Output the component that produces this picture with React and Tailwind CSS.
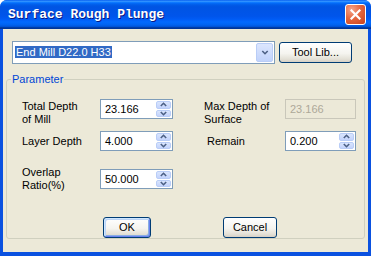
import React from 'react';

const Chevron = ({ up = false, w = 7 }) => (
  <svg width={w} height="5" viewBox="0 0 7 5">
    <path
      d={up ? 'M0.8 4 L3.5 1.3 L6.2 4' : 'M0.8 1 L3.5 3.7 L6.2 1'}
      stroke="#4D6185"
      strokeWidth="1.6"
      fill="none"
    />
  </svg>
);

const spinPart =
  'flex flex-1 items-center justify-center rounded-[2px] border border-[#B9CDF7] bg-[linear-gradient(180deg,#D9E5FD_0%,#C3D3FC_100%)]';

const SpinField = ({ value, width = 'w-[73px]' }) => (
  <div className={`flex h-[20px] ${width} border border-[#7F9DB9] bg-white p-[1px]`}>
    <span className="flex-1 pl-[3px] text-[11px] leading-[16px] text-black">{value}</span>
    <div className="flex w-[15px] flex-col gap-[1px]">
      <div className={spinPart}>
        <Chevron up />
      </div>
      <div className={spinPart}>
        <Chevron />
      </div>
    </div>
  </div>
);

const XpButton = ({ children, width, focused }) => (
  <button
    className={`h-[21px] ${width} rounded-[3px] border border-[#003C74] bg-[linear-gradient(180deg,#FFFFFF_0%,#F5F4EF_55%,#E3E0D6_85%,#D6D0C5_100%)] text-[11px] leading-[19px] text-black ${
      focused
        ? 'shadow-[inset_1px_1px_0_#CEE7FF,inset_-1px_-1px_0_#6982EE,inset_2px_2px_0_#BCD4F6,inset_-2px_-2px_0_#89ADE4]'
        : ''
    }`}
  >
    {children}
  </button>
);

export default function App() {
  return (
    <div className="flex h-[256px] w-[371px] flex-col overflow-hidden rounded-t-[7px] bg-[#0A51E0] font-['Liberation_Sans',Arial,sans-serif]">
      {/* title bar */}
      <div className="flex h-[29px] items-center justify-between bg-[linear-gradient(180deg,#0058EE_0%,#3593FF_4%,#288EFF_6%,#127DFF_8%,#036FFC_10%,#0262EE_14%,#0057E5_20%,#0054E3_24%,#0055EB_56%,#005BF5_66%,#026AFE_76%,#0062EF_86%,#0052D6_92%,#0040AB_94%,#003092_100%)] pl-[8px] pr-[5px]">
        <span className="font-['Liberation_Mono',monospace] text-[13px] font-bold leading-[16px] text-white [text-shadow:1px_1px_0_#0A1883]">
          Surface Rough Plunge
        </span>
        <div className="flex h-[21px] w-[21px] items-center justify-center rounded-[3px] border border-white bg-[radial-gradient(circle_at_30%_25%,#F4A58B_0%,#E5673F_45%,#C9411C_100%)]">
          <svg width="11" height="11" viewBox="0 0 11 11">
            <path d="M1.5 1.5 L9.5 9.5 M9.5 1.5 L1.5 9.5" stroke="white" strokeWidth="2.2" strokeLinecap="square" />
          </svg>
        </div>
      </div>

      {/* client area */}
      <div className="mx-[3px] mb-[4px] flex flex-1 flex-col bg-[#ECE9D8] text-[11px] text-black">
        <div className="flex items-center gap-[4px] pl-[9px] pt-[12px]">
          <div className="flex h-[23px] w-[263px] items-center border border-[#7F9DB9] bg-white p-[1px] pl-[2px]">
            <div className="flex-1">
              <span className="bg-[#316AC5] px-[1px] leading-[17px] text-white">End Mill D22.0 H33</span>
            </div>
            <div className="flex h-[19px] w-[17px] items-center justify-center rounded-[2px] border border-[#B9CDF7] bg-[linear-gradient(180deg,#DCE6FE_0%,#C1D3FB_100%)]">
              <Chevron w={8} />
            </div>
          </div>
          <XpButton width="w-[73px]">Tool Lib...</XpButton>
        </div>

        <fieldset className="mx-[3px] mt-[9px] rounded-[3px] border border-[#D0D0BF] pb-0">
          <legend className="ml-[4px] px-[1px] leading-[13px] text-[#0046D5]">Parameter</legend>

          <div className="flex flex-col pl-[15px] pt-[13px]">
            <div className="flex items-start">
              <span className="mt-[1px] w-[78px] leading-[13px]">
                Total Depth
                <br />
                of Mill
              </span>
              <SpinField value="23.166" />
              <span className="ml-[31px] mt-[1px] w-[81px] leading-[13px]">
                Max Depth of
                <br />
                Surface
              </span>
              <div className="h-[20px] w-[71px] border border-[#C9C7BA] pl-[4px] leading-[18px] text-[#ACA899]">23.166</div>
            </div>

            <div className="mt-[5px] flex items-center">
              <span className="w-[78px] leading-[13px]">Layer Depth</span>
              <SpinField value="4.000" />
              <span className="ml-[34px] w-[78px] leading-[13px]">Remain</span>
              <SpinField value="0.200" width="w-[71px]" />
            </div>

            <div className="mt-[15px] flex items-center">
              <span className="w-[78px] leading-[13px]">
                Overlap
                <br />
                Ratio(%)
              </span>
              <SpinField value="50.000" />
            </div>

            <div className="mt-[25px] flex gap-[72px] pl-[81px]">
              <XpButton width="w-[48px]" focused>
                OK
              </XpButton>
              <XpButton width="w-[54px]">Cancel</XpButton>
            </div>
          </div>
        </fieldset>
      </div>
    </div>
  );
}
